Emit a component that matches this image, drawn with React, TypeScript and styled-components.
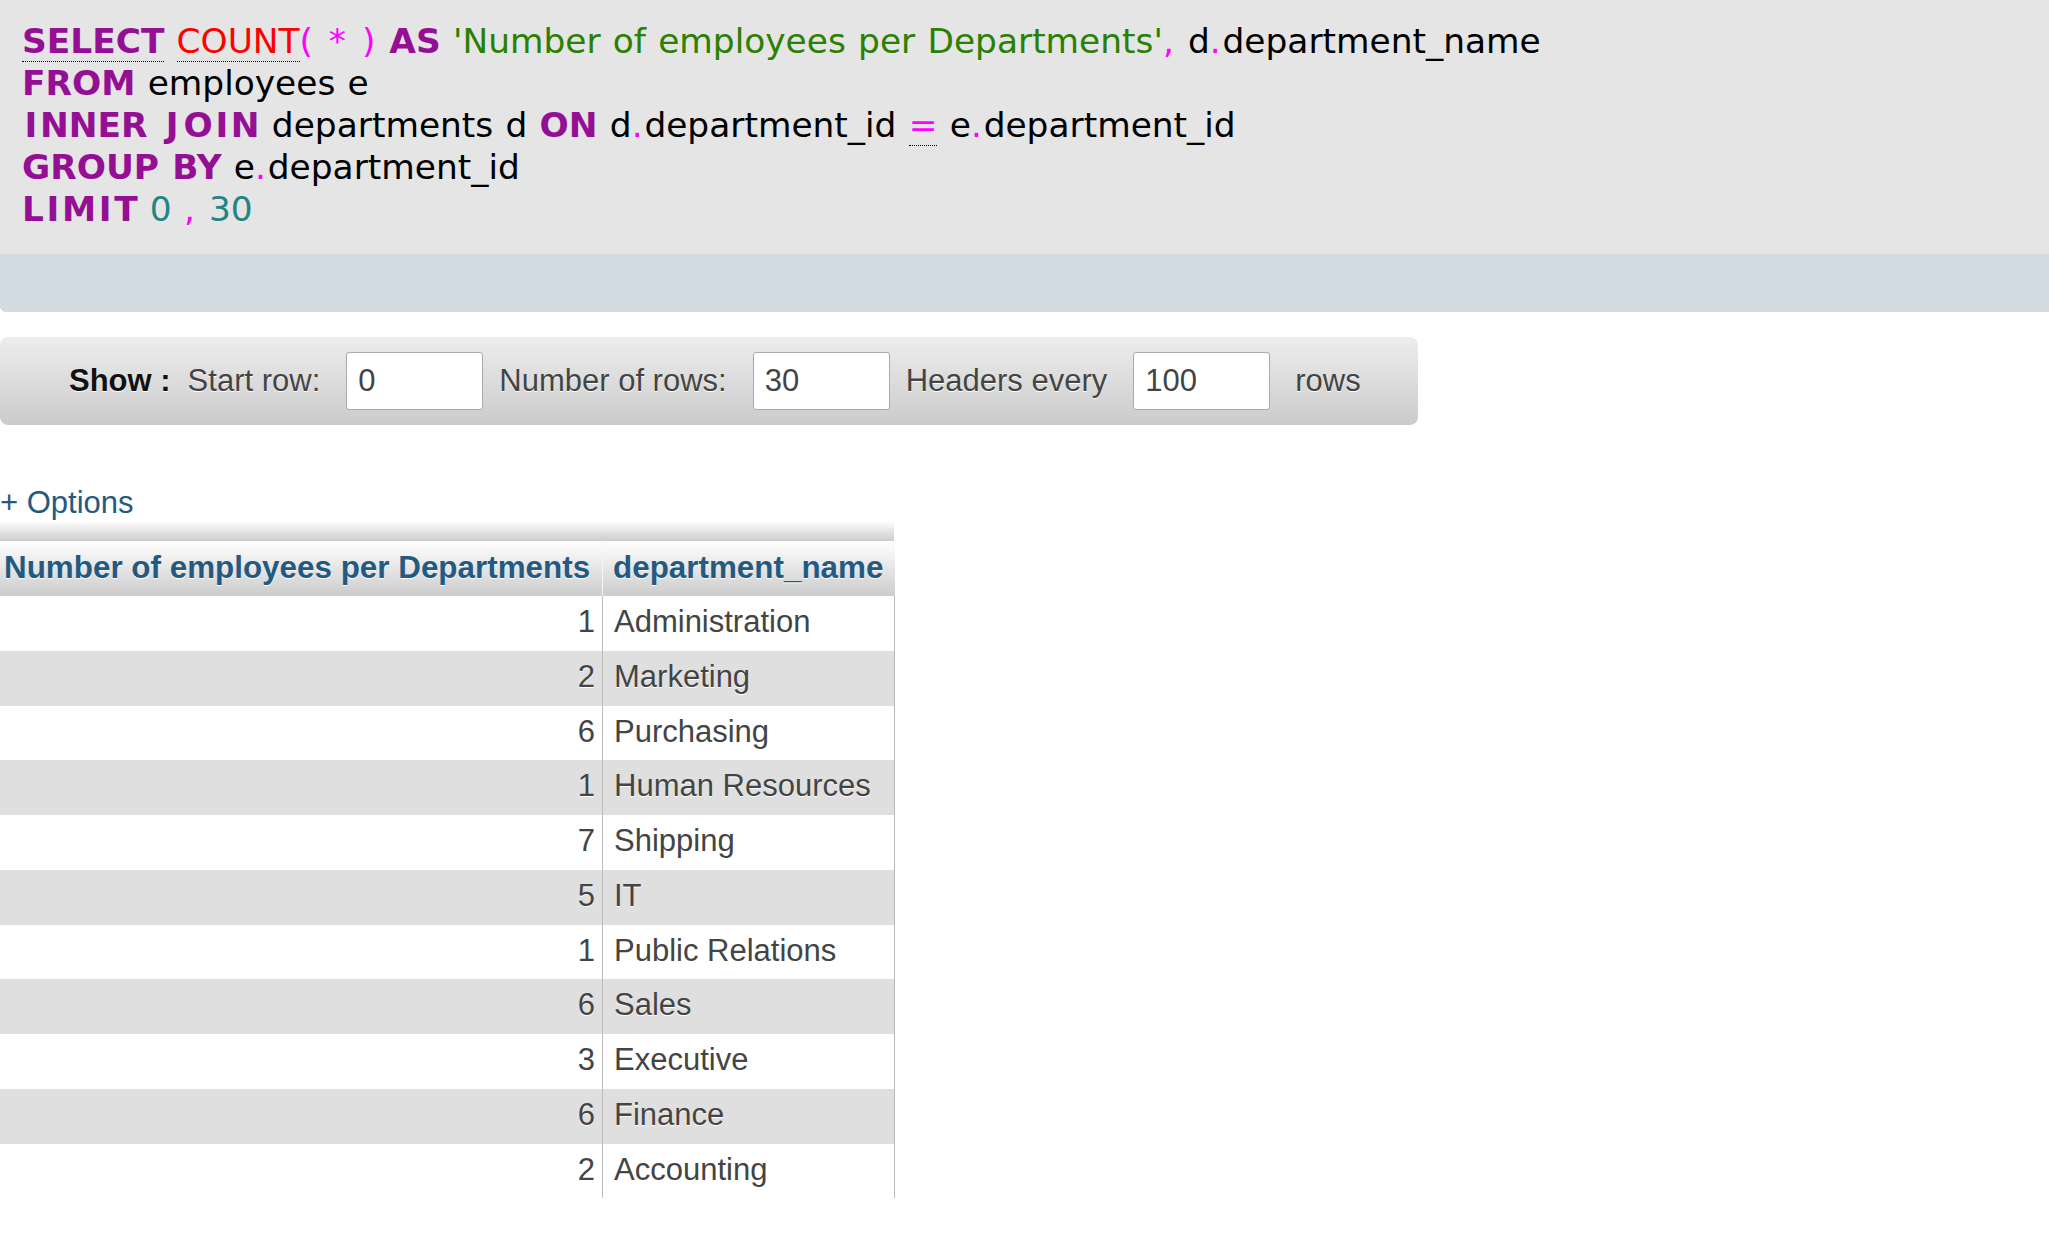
import React from "react";
import styled, { createGlobalStyle, css } from "styled-components";

const GlobalStyle = createGlobalStyle`
  html, body { margin: 0; padding: 0; background: #ffffff; }
  body { font-family: "Liberation Sans", Arial, sans-serif; }
`;

const Page = styled.div`
  width: 100%;
`;

/* ---------- SQL query box ---------- */
const SqlBox = styled.div`
  background: #e5e5e5;
  border-bottom-left-radius: 6px;
  overflow: hidden;
`;

const Code = styled.div`
  padding: 20px 22px 24px;
  font-family: "DejaVu Sans", Verdana, sans-serif;
  font-size: 34.4px;
  line-height: 42px;
  word-spacing: 1.3px;
  color: #000;
  white-space: pre;
`;

const CodeLine = styled.div``;

type TokKind = "kw" | "fn" | "op" | "str" | "num" | "id";

const tokColors: Record<TokKind, string> = {
  kw: "#940f94",
  fn: "#ff0000",
  op: "#ff00ff",
  str: "#2a8000",
  num: "#1f8585",
  id: "#000000",
};

const Tok = styled.span<{ $k: TokKind; $abbr?: boolean }>`
  color: ${(p) => tokColors[p.$k]};
  font-weight: ${(p) => (p.$k === "kw" ? 700 : 400)};
  letter-spacing: ${(p) => (p.$k === "op" && !p.$abbr ? "1.8px" : "0")};
  ${(p) =>
    p.$abbr &&
    css`
      border-bottom: 1px dotted #000;
    `}
`;

/* the bold capitals I and J of the original face are wide glyphs */
const WideCap = styled.span<{ $pad: number }>`
  padding: 0 ${(p) => p.$pad}px;
`;

const widePad: Record<string, number> = { I: 2.6, J: 5 };

function Kw({ text, abbr }: { text: string; abbr?: boolean }) {
  const parts = text.split(/([IJ])/);
  return (
    <Tok $k="kw" $abbr={abbr}>
      {parts.map((p, i) =>
        widePad[p] ? (
          <WideCap key={i} $pad={widePad[p]}>
            {p}
          </WideCap>
        ) : (
          p
        )
      )}
    </Tok>
  );
}

const ToolsBand = styled.div`
  height: 58px;
  background: #d4dce3;
`;

/* ---------- Show bar ---------- */
const ShowBar = styled.div`
  display: flex;
  align-items: center;
  width: fit-content;
  margin-top: 25px;
  padding: 15px 57px 15px 69px;
  border-radius: 8px;
  background: linear-gradient(to bottom, #ededed, #cbcbcb);
  font-size: 31px;
`;

const ShowTitle = styled.span`
  font-weight: 700;
  color: #111;
  text-shadow: 0 1px 0 #fff;
  margin-right: 17px;
`;

const BarLabel = styled.span<{ $gap?: number }>`
  color: #444;
  text-shadow: 0 1px 0 #fff;
  margin-right: ${(p) => (p.$gap ?? 26)}px;
`;

const NumInput = styled.input<{ $gap?: number }>`
  box-sizing: border-box;
  width: 137px;
  height: 58px;
  margin: 0 ${(p) => (p.$gap ?? 16)}px 0 0;
  padding: 0 11px;
  border: 1px solid #aaaaaa;
  border-radius: 3px;
  background: #fff;
  font-family: "Liberation Sans", Arial, sans-serif;
  font-size: 31px;
  color: #444;
  outline: none;
`;

/* ---------- Options link ---------- */
const OptionsLink = styled.a`
  display: block;
  margin-top: 60px;
  font-size: 31px;
  line-height: 36px;
  color: #235a81;
  text-decoration: none;
`;

/* ---------- Result table ---------- */
const TableWrap = styled.div`
  width: 895px;
`;

const TopStrip = styled.div`
  height: 20px;
  width: 894px;
  background: linear-gradient(to bottom, #ffffff, #cccccc);
`;

const Table = styled.table`
  border-collapse: separate;
  border-spacing: 0;
  table-layout: fixed;
  width: 895px;
  font-size: 31px;
`;

const HeadCell = styled.th<{ $first?: boolean }>`
  padding: 0 0 2px ${(p) => (p.$first ? 4 : 10)}px;
  line-height: 53px;
  font-size: 31.4px;
  text-align: left;
  font-weight: 700;
  color: #235a81;
  text-shadow: 0 1px 0 #fff;
  white-space: nowrap;
  background: linear-gradient(to bottom, #ffffff, #cccccc);
  border-right: ${(p) => (p.$first ? "1px solid #f4f4f4" : "none")};
`;

const Row = styled.tr<{ $alt: boolean }>`
  background: ${(p) => (p.$alt ? "#dfdfdf" : "#ffffff")};
`;

const CountCell = styled.td`
  padding: 0 7px 2.75px 0;
  line-height: 52px;
  text-align: right;
  color: #444;
  text-shadow: 0 1px 0 #fff;
  border-right: 1px solid #bbbbbb;
`;

const NameCell = styled.td`
  padding: 0 0 2.75px 11px;
  line-height: 52px;
  text-align: left;
  color: #444;
  text-shadow: 0 1px 0 #fff;
  white-space: nowrap;
  border-right: 1px solid #bbbbbb;
`;

const rows: [number, string][] = [
  [1, "Administration"],
  [2, "Marketing"],
  [6, "Purchasing"],
  [1, "Human Resources"],
  [7, "Shipping"],
  [5, "IT"],
  [1, "Public Relations"],
  [6, "Sales"],
  [3, "Executive"],
  [6, "Finance"],
  [2, "Accounting"],
];

export default function App() {
  return (
    <Page>
      <GlobalStyle />
      <SqlBox>
        <Code>
          <CodeLine>
            <Kw text="SELECT" abbr /> <Tok $k="fn" $abbr>COUNT</Tok>
            <Tok $k="op">( * )</Tok> <Kw text="AS" />{" "}
            <Tok $k="str">'Number of employees per Departments'</Tok>
            <Tok $k="op">,</Tok> <Tok $k="id">d</Tok>
            <Tok $k="op">.</Tok>
            <Tok $k="id">department_name</Tok>
          </CodeLine>
          <CodeLine>
            <Kw text="FROM" /> <Tok $k="id">employees e</Tok>
          </CodeLine>
          <CodeLine>
            <Kw text="INNER JOIN" /> <Tok $k="id">departments d</Tok>{" "}
            <Kw text="ON" /> <Tok $k="id">d</Tok>
            <Tok $k="op">.</Tok>
            <Tok $k="id">department_id</Tok>{" "}
            <Tok $k="op" $abbr>=</Tok> <Tok $k="id">e</Tok>
            <Tok $k="op">.</Tok>
            <Tok $k="id">department_id</Tok>
          </CodeLine>
          <CodeLine>
            <Kw text="GROUP BY" /> <Tok $k="id">e</Tok>
            <Tok $k="op">.</Tok>
            <Tok $k="id">department_id</Tok>
          </CodeLine>
          <CodeLine>
            <Kw text="LIMIT" /> <Tok $k="num">0</Tok> <Tok $k="op">,</Tok>{" "}
            <Tok $k="num">30</Tok>
          </CodeLine>
        </Code>
        <ToolsBand />
      </SqlBox>

      <ShowBar>
        <ShowTitle>Show :</ShowTitle>
        <BarLabel>Start row:</BarLabel>
        <NumInput readOnly defaultValue="0" />
        <BarLabel>Number of rows:</BarLabel>
        <NumInput readOnly defaultValue="30" />
        <BarLabel>Headers every</BarLabel>
        <NumInput readOnly defaultValue="100" $gap={25} />
        <BarLabel $gap={0}>rows</BarLabel>
      </ShowBar>

      <OptionsLink href="#">+ Options</OptionsLink>

      <TableWrap>
        <TopStrip />
        <Table>
          <colgroup>
            <col style={{ width: 603 }} />
            <col style={{ width: 292 }} />
          </colgroup>
          <thead>
            <tr>
              <HeadCell $first>Number of employees per Departments</HeadCell>
              <HeadCell>department_name</HeadCell>
            </tr>
          </thead>
          <tbody>
            {rows.map(([n, name], i) => (
              <Row key={name} $alt={i % 2 === 1}>
                <CountCell>{n}</CountCell>
                <NameCell>{name}</NameCell>
              </Row>
            ))}
          </tbody>
        </Table>
      </TableWrap>
    </Page>
  );
}
